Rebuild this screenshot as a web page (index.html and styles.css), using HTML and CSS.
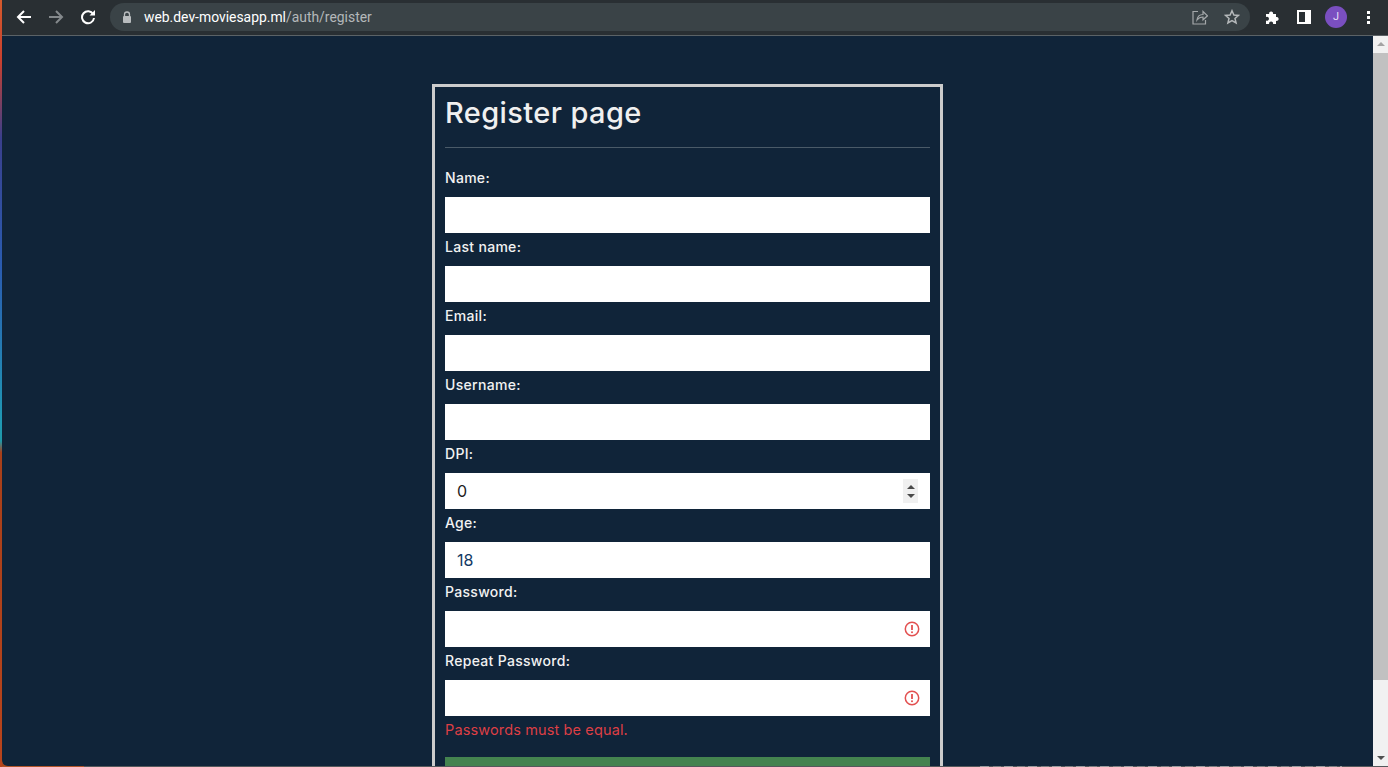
FILE: index.html
```html
<!DOCTYPE html>
<html lang="en">
<head>
<meta charset="utf-8">
<title>Register page</title>
<link rel="stylesheet" href="styles.css">
</head>
<body>
<div class="wallpaper"></div>
<div class="window">
  <header class="toolbar">
    <svg class="nav-icon" viewBox="0 0 16 16"><path d="M15 8H2.500M8 2 2 8l6 6" fill="none" stroke="#fff" stroke-width="2"/></svg>
    <svg class="nav-icon" viewBox="0 0 16 16"><path d="M1 8h12.500M8 2l6 6-6 6" fill="none" stroke="#84898c" stroke-width="2"/></svg>
    <svg class="nav-icon" viewBox="0 0 16 16"><path d="M13.200 5.200A6 6 0 1 0 14 9" fill="none" stroke="#fff" stroke-width="2"/><path d="M9.500 6.500H15V1z" fill="#fff"/></svg>
    <div class="omnibox">
      <svg class="lock" viewBox="0 0 10 12"><path d="M2.500 5V3.500a2.500 2.500 0 0 1 5 0V5" fill="none" stroke="#b8bcbe" stroke-width="1.300"/><rect x="1" y="5" width="8" height="7" rx="1" fill="#b8bcbe"/></svg>
      <span class="url"><span class="host">web.dev-moviesapp.ml</span>/auth/register</span>
      <svg class="share" viewBox="0 0 16 16"><path d="M6 2.500H1v12.500h12.500V11" fill="none" stroke="#a4a8aa" stroke-width="1.200"/><path d="M5 11c.5-4 3-5.500 6-5.500V2.500l4.500 4.300-4.500 4V8c-3 0-4.500 1-6 3z" fill="none" stroke="#a4a8aa" stroke-width="1.200"/></svg>
      <svg class="star" viewBox="0 0 16 16"><path d="m8 1.700 1.900 4.300 4.600.4-3.500 3 1.100 4.600L8 11.600 3.900 14 5 9.400l-3.500-3 4.600-.4z" fill="none" stroke="#b4b8ba" stroke-width="1.500"/></svg>
    </div>
    <svg class="puzzle" viewBox="0 0 16 16"><path d="M1 5h3.200a2 2 0 1 1 3.800 0H11v3a2 2 0 1 1 0 3.800V15H8a2 2 0 1 0-3.800 0H1v-3.500a2 2 0 1 0 0-3.500z" fill="#fff"/></svg>
    <span class="side-panel"><span class="side-panel-inner"></span></span>
    <span class="avatar">J</span>
    <span class="kebab"><i></i><i></i><i></i></span>
  </header>
  <div class="viewport">
    <main class="page">
      <section class="card">
        <h1 class="title">Register page</h1>
        <hr class="rule">
        <form class="form">
          <label class="label">Name:</label>
          <input class="input" type="text">
          <label class="label">Last name:</label>
          <input class="input" type="text">
          <label class="label">Email:</label>
          <input class="input" type="email">
          <label class="label">Username:</label>
          <input class="input" type="text">
          <label class="label">DPI:</label>
          <div class="field">
            <input class="input value-dark" type="number" value="0">
            <span class="spinner"><i class="up"></i><i class="down"></i></span>
          </div>
          <label class="label">Age:</label>
          <input class="input value-blue" type="number" value="18">
          <label class="label">Password:</label>
          <div class="field">
            <input class="input" type="password">
            <svg class="alert" viewBox="0 0 16 16"><circle cx="8" cy="8" r="6.700" fill="none" stroke="#e25050" stroke-width="1.500"/><path d="M8 4v5" stroke="#e25050" stroke-width="1.800"/><circle cx="8" cy="11.300" r="1" fill="#e25050"/></svg>
          </div>
          <label class="label">Repeat Password:</label>
          <div class="field">
            <input class="input" type="password">
            <svg class="alert" viewBox="0 0 16 16"><circle cx="8" cy="8" r="6.700" fill="none" stroke="#e25050" stroke-width="1.500"/><path d="M8 4v5" stroke="#e25050" stroke-width="1.800"/><circle cx="8" cy="11.300" r="1" fill="#e25050"/></svg>
          </div>
          <p class="error">Passwords must be equal.</p>
          <div class="submit"></div>
        </form>
      </section>
    </main>
    <aside class="scrollbar">
      <span class="arrow-up"></span>
      <span class="thumb"></span>
      <span class="arrow-down"></span>
    </aside>
  </div>
  <div class="taskbar"></div>
</div>
</body>
</html>
```
FILE: styles.css
```css
* { box-sizing: border-box; }
html, body { margin: 0; height: 767px; overflow: hidden; }
body { display: flex; background: #a8441c; font-family: "Inter", "Liberation Sans", sans-serif; }
.wallpaper { width: 2px; flex: none; background: linear-gradient(180deg, #d65a2c 0, #c8402f 8%, #3a3f8c 18%, #2a5cb0 35%, #2098b4 55%, #2098a8 57.500%, #a8401a 59%, #b8441c 100%); }
.window { flex: 1; min-width: 0; display: flex; flex-direction: column; height: 767px; }
.toolbar { height: 36px; flex: none; display: flex; align-items: center; background: #292f33; border-bottom: 1px solid #5b6266; padding: 0 0 1px 14px; }
.nav-icon { width: 16px; height: 16px; flex: none; margin-right: 16px; }
.omnibox { margin-left: -2px; width: 1140px; height: 28px; flex: none; border-radius: 14px; background: #3a4347; display: flex; align-items: center; padding: 0 10px 0 12px; }
.lock { width: 10px; height: 12px; flex: none; margin-right: 12px; }
.url { flex: 1; font: 13.900px "Roboto", "Liberation Sans", sans-serif; color: #b4b8ba; }
.host { color: #fff; }
.share { width: 16px; height: 16px; margin-right: 16px; }
.star { width: 16px; height: 16px; }
.puzzle { width: 16px; height: 16px; margin-left: 15px; flex: none; }
.side-panel { width: 14px; height: 14px; margin-left: 16px; background: #fff; padding: 2px 6px 2px 2px; flex: none; }
.side-panel-inner { display: block; width: 100%; height: 100%; background: #292f33; }
.avatar { width: 22px; height: 22px; margin-left: 14px; border-radius: 50%; background: #7a4fc0; color: #e6dcf6; font: 11px/22px "Roboto", sans-serif; text-align: center; flex: none; }
.kebab { margin-left: 20px; display: flex; flex-direction: column; gap: 2px; flex: none; }
.kebab i { width: 3px; height: 3px; background: #fff; }
.viewport { flex: 1; min-height: 0; display: flex; overflow: hidden; }
.page { flex: 1; min-width: 0; background: #102439; display: flex; justify-content: center; padding-top: 48px; border-bottom-left-radius: 6px; }
.card { width: 511px; height: 800px; flex: none; border: 3px solid #ccc; padding: 10px 10px 0; color: #f2f2f2; }
.title { margin: -2px 0 0; font-size: 29px; font-weight: 500; line-height: 36px; letter-spacing: .4px; color: #f0f0f0; }
.rule { margin: 16px 0 16px; border: 0; border-top: 1px solid #4a5a68; }
.form { display: flex; flex-direction: column; }
.label { font-size: 14px; font-weight: 450; line-height: 27px; margin-bottom: 8px; height: 25px; letter-spacing: .3px; color: #f2f2f2; }
.input { display: block; width: 100%; height: 36px; border: 0; border-radius: 0; background: #fff; padding: 0 12px; font: 400 16px "Inter", sans-serif; appearance: textfield; outline: none; }
.value-dark { color: #222; }
.value-blue { color: #123a64; }
.field { position: relative; }
.spinner { position: absolute; right: 12px; top: 6px; width: 15px; height: 24px; background: #f0f0f0; display: flex; flex-direction: column; align-items: center; justify-content: center; gap: 5px; }
.spinner i { width: 0; height: 0; border-left: 4px solid transparent; border-right: 4px solid transparent; }
.up { border-bottom: 4px solid #4a4a4a; }
.down { border-top: 4px solid #4a4a4a; }
.alert { position: absolute; right: 10px; top: 10px; width: 16px; height: 16px; }
.error { margin: 1px 0 0; font-size: 14.500px; line-height: 25px; letter-spacing: .13px; color: #dd3f45; }
.submit { margin-top: 15px; height: 40px; background: #44834f; }
.scrollbar { width: 15px; flex: none; background: #f1f1f1; display: flex; flex-direction: column; align-items: center; }
.arrow-up { margin-top: 6px; border-left: 4px solid transparent; border-right: 4px solid transparent; border-bottom: 4px solid #a3a3a3; }
.thumb { margin-top: 7px; width: 15px; height: 627px; background: #c1c1c1; }
.arrow-down { margin-top: auto; margin-bottom: 6px; border-left: 4px solid transparent; border-right: 4px solid transparent; border-top: 4px solid #505050; }
.taskbar { height: 1px; flex: none; background: repeating-linear-gradient(90deg, #9a9c9e 0 9px, #55595c 9px 13px, #7c7f81 13px 21px, #55595c 21px 24px) 978px 0 / 362px 1px no-repeat, linear-gradient(90deg, #b0552a 0 82px, #55595c 82px); }
```
